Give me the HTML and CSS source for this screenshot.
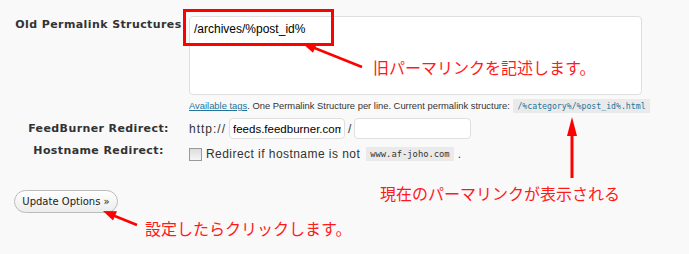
FILE: index.html
```html
<!DOCTYPE html>
<html lang="en">
<head>
 <meta charset="UTF-8">
 <title>Permalink Redirect Options</title>
 <link rel="stylesheet" href="styles.css">
</head>
<body>
 <div id="wrapper">
  <div class="form-table">
   <div class="label label-top">Old Permalink Structures</div>
   <div class="field">
    <textarea class="structures">/archives/%post_id%</textarea>
    <p class="note"><a href="javascript:void(0)">Available tags</a>. One Permalink Structure per line. Current permalink structure: <code class="current">/%category%/%post_id%.html</code></p>
   </div>
   <div class="label">FeedBurner Redirect:</div>
   <div class="field row">
    <span class="proto">http://</span>
    <input type="text" class="txt" value="feeds.feedburner.com">
    <span>/</span>
    <input type="text" class="txt" value="">
   </div>
   <div class="label">Hostname Redirect:</div>
   <div class="field row">
    <label class="check"><input type="checkbox" class="box"> Redirect if hostname is not <code>www.af-joho.com</code>.</label>
   </div>
  </div>
  <p class="submit"><button class="button">Update Options &raquo;</button></p>

  <!-- annotations -->
  <svg class="marks" width="689" height="254" viewBox="0 0 689 254">
   <rect x="184.5" y="10.5" width="148" height="34" fill="none" stroke="#ff0000" stroke-width="3"/>
   <line x1="362" y1="67" x2="312" y2="47" stroke="#ff0000" stroke-width="2.5"/>
   <polygon points="302,43 317,43.6 313,52.8" fill="#ff0000"/>
   <line x1="572" y1="134" x2="572" y2="178" stroke="#ff0000" stroke-width="3"/>
   <polygon points="572,117 577,136 567,136" fill="#ff0000"/>
   <line x1="137" y1="225" x2="111" y2="214.5" stroke="#ff0000" stroke-width="2.5"/>
   <polygon points="103,211 117,211.3 113,220.5" fill="#ff0000"/>
  </svg>
  <span class="memo memo-old">旧パーマリンクを記述します。</span>
  <span class="memo memo-now">現在のパーマリンクが表示される</span>
  <span class="memo memo-btn">設定したらクリックします。</span>
 </div>
</body>
</html>
```

FILE: styles.css
```css
body { margin: 0; background: #f9f9f9; font-family: "Liberation Sans", Arial, sans-serif; color: #333; }
#wrapper { position: relative; width: 689px; height: 254px; overflow: hidden; }

.form-table { display: grid; grid-template-columns: 181px 500px; padding: 16px 0 0 8px; }
.label { font-family: "DejaVu Sans", Verdana, sans-serif; font-weight: bold; font-size: 11px; letter-spacing: 0.4px; color: #333; text-align: center; display: flex; align-items: center; justify-content: center; }
.label-top { align-items: flex-start; padding-top: 2px; }
.field { font-size: 12px; }
.row { display: flex; align-items: center; gap: 3px; }

.structures { display: block; box-sizing: border-box; width: 453px; height: 79px; margin: 0; padding: 5px 4px; border: 1px solid #dfdfdf; border-radius: 4px; background: #fff; resize: none; font-family: "Liberation Sans", Arial, sans-serif; font-size: 12px; color: #000; }
.note { margin: 4px 0 5px; line-height: 14px; font-size: 9.4px; color: #333; white-space: nowrap; }
.note a { color: #21759b; }
.note code, .check code { font-family: "DejaVu Sans Mono", monospace; font-size: 8.2px; background: #eaeaea; padding: 2px 4px; }
.note code { color: #21759b; margin-left: 1px; }

.txt { box-sizing: border-box; height: 21px; width: 116px; margin: 0; padding: 1px 3px; border: 1px solid #dfdfdf; border-radius: 4px; background: #fff; font-family: "Liberation Sans", Arial, sans-serif; font-size: 11.5px; color: #000; }
.row .txt:last-child { width: 117px; }
.row span { font-size: 12px; color: #333; }
.row .proto { letter-spacing: 1px; }

.check { display: flex; align-items: center; gap: 4px; margin-top: 8px; font-size: 12px; letter-spacing: 0.45px; color: #333; }
.check code { color: #333; margin-left: 2px; font-size: 8.8px; letter-spacing: 0; }
.box { appearance: none; width: 13px; height: 13px; margin: 0; border: 1px solid #999; background: linear-gradient(#ddd, #f4f4f4); box-sizing: border-box; }

.submit { margin: 29px 0 0 14px; }
.button { height: 23px; width: 104px; padding: 0; border: 1px solid #bbb; border-radius: 12px; background: linear-gradient(#fff, #ececec); font-family: "DejaVu Sans", Verdana, sans-serif; font-size: 10px; color: #222; }

.marks { position: absolute; left: 0; top: 0; }
.memo { position: absolute; font-family: "Noto Sans CJK JP", sans-serif; font-size: 16px; line-height: 1; color: #ff1a1a; white-space: nowrap; }
.memo-old { left: 373px; top: 59px; }
.memo-now { left: 380px; top: 185px; }
.memo-btn { left: 145px; top: 220px; }
```
